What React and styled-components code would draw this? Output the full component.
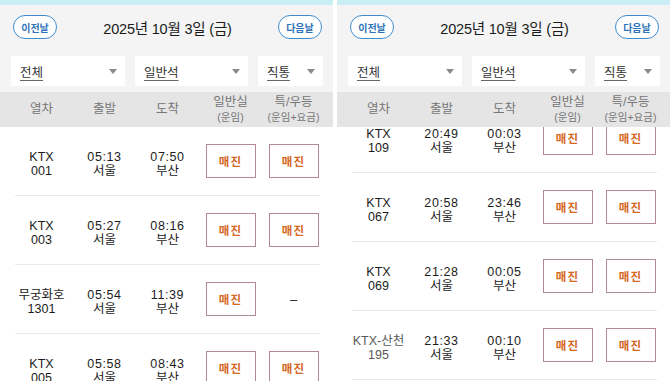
import React from 'react';
import styled, { createGlobalStyle } from 'styled-components';

const Global = createGlobalStyle`
  html, body { margin: 0; padding: 0; background: #ffffff; }
  body { font-family: "Liberation Sans", "Noto Sans CJK KR", sans-serif; }
`;

const Page = styled.div`
  display: flex;
  gap: 4px;
  width: 670px;
  height: 381px;
  overflow: hidden;
  background: #ffffff;
`;

const Panel = styled.div`
  width: 333px;
  height: 381px;
  flex: none;
  display: flex;
  flex-direction: column;
  overflow: hidden;
  background: #ffffff;
`;

const TopStrip = styled.div`
  height: 5px;
  flex: none;
  background: #c9eef6;
`;

const Header = styled.div`
  flex: none;
  background: #f4f4f4;
  padding: 10px 11px 6px 11px;
  display: flex;
  flex-direction: column;
  gap: 17px;
`;

const NavRow = styled.div`
  display: flex;
  align-items: center;
  justify-content: space-between;
  height: 24px;
  padding-left: 2px;
`;

const Pill = styled.button`
  width: 44px;
  height: 24px;
  border: 1.5px solid #3d8bcf;
  border-radius: 12px;
  background: #ffffff;
  color: #2d73b8;
  font-family: "Noto Sans CJK KR", sans-serif;
  font-weight: 700;
  font-size: 10px;
  padding: 0;
  display: flex;
  align-items: center;
  justify-content: center;
`;

const DateTitle = styled.div`
  font-size: 14.5px;
  color: #1a1a1a;
  letter-spacing: -0.2px;
`;

const FilterRow = styled.div`
  display: grid;
  grid-template-columns: 114px 113px 65px;
  gap: 10px;
`;

const Select = styled.div`
  height: 30px;
  background: #ffffff;
  display: flex;
  align-items: center;
  justify-content: space-between;
  padding: 0 8px 0 9px;
  box-sizing: border-box;
`;

const SelectLabel = styled.span`
  font-size: 12.5px;
  color: #333333;
  text-decoration: underline;
  text-underline-offset: 3px;
  text-decoration-color: #666;
`;

const Caret = styled.span`
  width: 0;
  height: 0;
  border-left: 4px solid transparent;
  border-right: 4px solid transparent;
  border-top: 5px solid #8a8a8a;
`;

const ColumnBand = styled.div`
  flex: none;
  height: 35px;
  background: #e5e5e5;
  display: grid;
  grid-template-columns: repeat(5, 63px);
  padding-left: 10px;
  align-items: center;
`;

const ColHead = styled.div`
  display: flex;
  flex-direction: column;
  align-items: center;
  color: #767676;
  font-size: 12.5px;
  line-height: 15px;
`;

const ColSub = styled.span`
  font-size: 10.5px;
  line-height: 14px;
`;

const ListViewport = styled.div`
  flex: 1;
  overflow: hidden;
`;

const List = styled.div`
  margin-top: ${(p) => p.$offset || 0}px;
`;

const Row = styled.div`
  height: 68px;
  display: grid;
  grid-template-columns: repeat(5, 63px);
  padding-left: 10px;
  align-items: center;
  border-bottom: 1px solid transparent;
  position: relative;
  &::after {
    content: "";
    position: absolute;
    left: 15px;
    right: 13px;
    bottom: -1px;
    height: 1px;
    background: #e9e9e9;
  }
`;

const Cell = styled.div`
  display: flex;
  flex-direction: column;
  align-items: center;
  padding-top: 6px;
  font-size: 12.5px;
  line-height: 14px;
  color: ${(p) => (p.$muted ? '#5a5a5a' : '#1c1c1c')};
  white-space: nowrap;
`;

const Time = styled.span`
  letter-spacing: 0.6px;
`;

const SoldOut = styled.div`
  width: 50px;
  height: 34px;
  border: 1px solid #b3899a;
  box-sizing: border-box;
  display: flex;
  align-items: center;
  justify-content: center;
  color: #d5681f;
  font-family: "Noto Sans CJK KR", sans-serif;
  font-weight: 700;
  font-size: 11.5px;
  letter-spacing: 1.2px;
  justify-self: center;
  background: #ffffff;
`;

const Dash = styled.div`
  justify-self: center;
  color: #222;
  font-size: 13px;
`;

const leftRows = [
  { name: 'KTX', no: '001', dep: '05:13', arr: '07:50', first: true },
  { name: 'KTX', no: '003', dep: '05:27', arr: '08:16', first: true },
  { name: '무궁화호', no: '1301', dep: '05:54', arr: '11:39', first: false },
  { name: 'KTX', no: '005', dep: '05:58', arr: '08:43', first: true },
];

const rightRows = [
  { name: 'KTX', no: '109', dep: '20:49', arr: '00:03', first: true },
  { name: 'KTX', no: '067', dep: '20:58', arr: '23:46', first: true },
  { name: 'KTX', no: '069', dep: '21:28', arr: '00:05', first: true },
  { name: 'KTX-산천', no: '195', dep: '21:33', arr: '00:10', first: true, muted: true },
];

function TrainRow({ r }) {
  return (
    <Row>
      <Cell $muted={r.muted}>
        <span>{r.name}</span>
        <span>{r.no}</span>
      </Cell>
      <Cell>
        <Time>{r.dep}</Time>
        <span>서울</span>
      </Cell>
      <Cell>
        <Time>{r.arr}</Time>
        <span>부산</span>
      </Cell>
      <SoldOut>매진</SoldOut>
      {r.first ? <SoldOut>매진</SoldOut> : <Dash>–</Dash>}
    </Row>
  );
}

function Screen({ rows, offset }) {
  return (
    <Panel>
      <TopStrip />
      <Header>
        <NavRow>
          <Pill>이전날</Pill>
          <DateTitle>2025년 10월 3일 (금)</DateTitle>
          <Pill>다음날</Pill>
        </NavRow>
        <FilterRow>
          <Select>
            <SelectLabel>전체</SelectLabel>
            <Caret />
          </Select>
          <Select>
            <SelectLabel>일반석</SelectLabel>
            <Caret />
          </Select>
          <Select>
            <SelectLabel>직통</SelectLabel>
            <Caret />
          </Select>
        </FilterRow>
      </Header>
      <ColumnBand>
        <ColHead>열차</ColHead>
        <ColHead>출발</ColHead>
        <ColHead>도착</ColHead>
        <ColHead>
          <span>일반실</span>
          <ColSub>(운임)</ColSub>
        </ColHead>
        <ColHead>
          <span>특/우등</span>
          <ColSub>(운임+요금)</ColSub>
        </ColHead>
      </ColumnBand>
      <ListViewport>
        <List $offset={offset}>
          {rows.map((r) => (
            <TrainRow key={r.no} r={r} />
          ))}
        </List>
      </ListViewport>
    </Panel>
  );
}

export default function App() {
  return (
    <>
      <Global />
      <Page>
        <Screen rows={leftRows} offset={0} />
        <Screen rows={rightRows} offset={-23} />
      </Page>
    </>
  );
}
